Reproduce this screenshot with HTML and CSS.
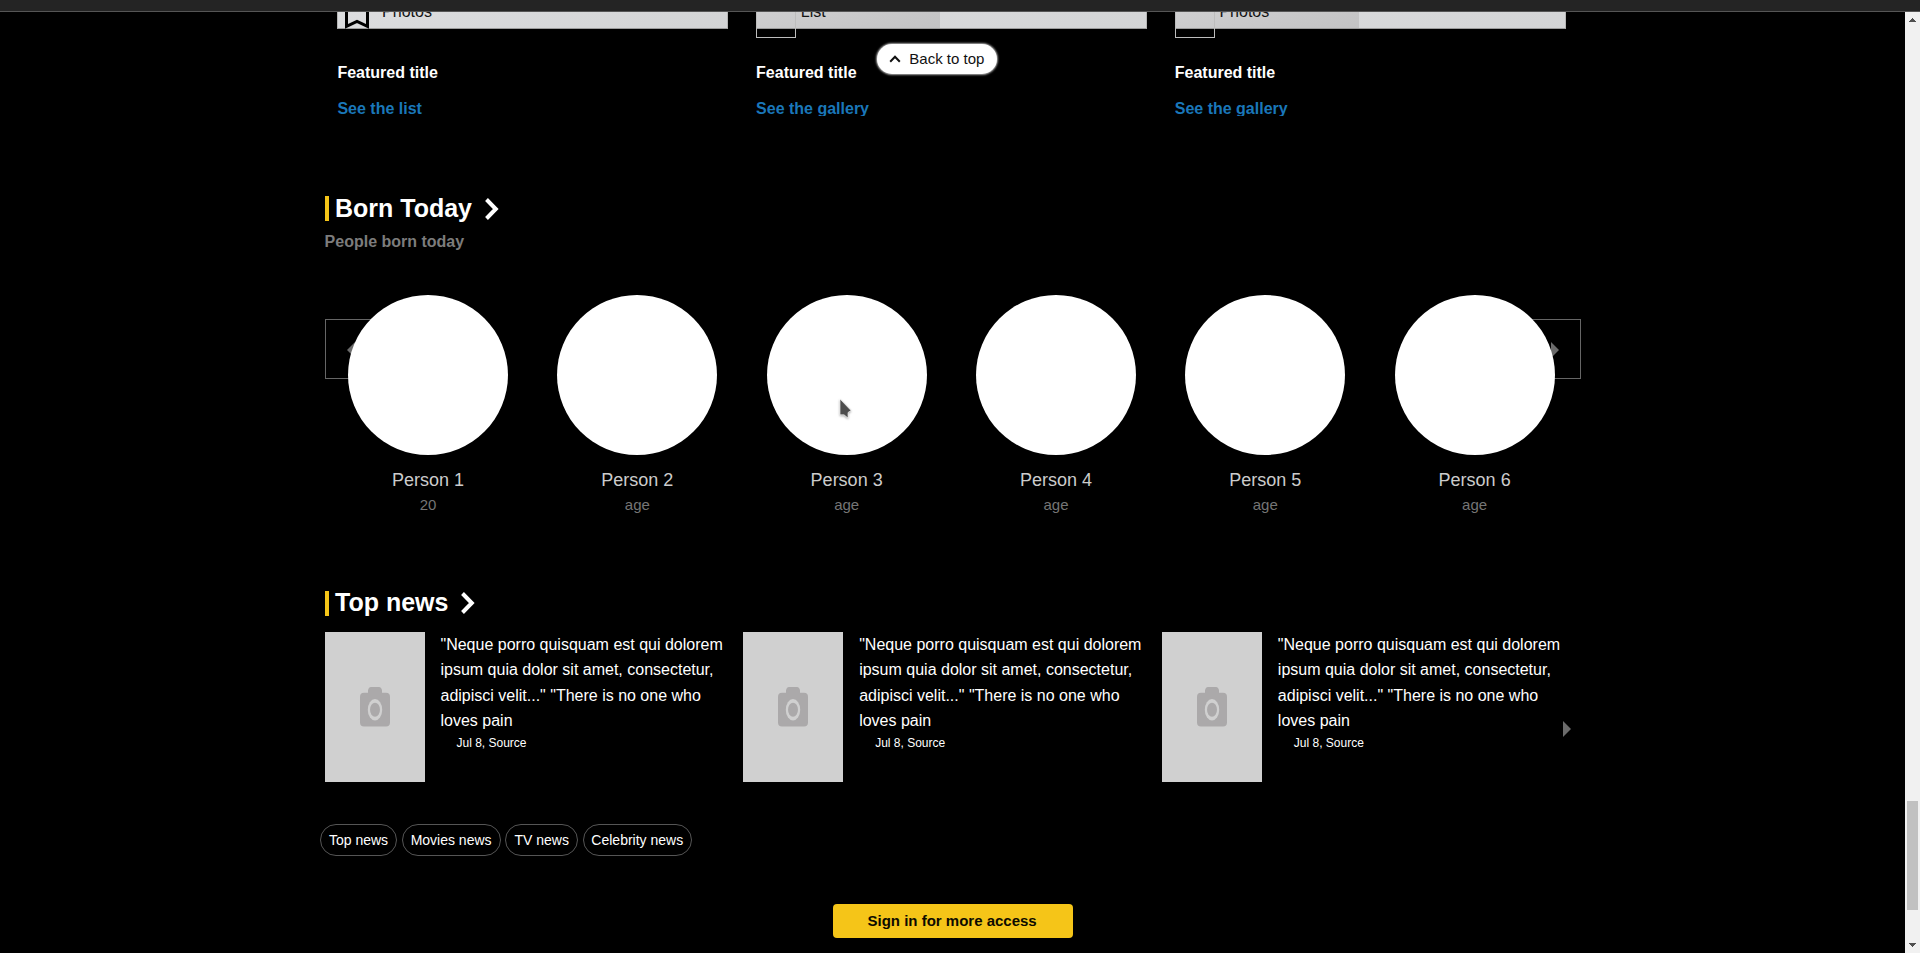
FILE: index.html
```html
<!DOCTYPE html>
<html lang="en">
<head>
<meta charset="utf-8">
<title>Home</title>
<link rel="stylesheet" href="styles.css">
</head>
<body>
<header class="topbar"></header>
<div class="viewport">
  <main class="page">
    <section class="featured">
      <article class="feature">
        <div class="poster">
          <svg class="bookmark" width="24" height="30" viewBox="0 0 24 30"><path d="M1.5 0V27.3L12 22.5L22.5 27.3V0" fill="none" stroke="#000" stroke-width="3"/></svg>
          <span class="poster-label">Photos</span>
        </div>
        <h3 class="feature-title">Featured title</h3>
        <a class="feature-link">See the list</a>
      </article>
      <article class="feature">
        <div class="poster"><div class="shade"></div><div class="ribbon"></div><span class="poster-label">List</span></div>
        <h3 class="feature-title">Featured title</h3>
        <a class="feature-link">See the gallery</a>
      </article>
      <article class="feature">
        <div class="poster"><div class="shade"></div><div class="ribbon"></div><span class="poster-label">Photos</span></div>
        <h3 class="feature-title">Featured title</h3>
        <a class="feature-link">See the gallery</a>
      </article>
    </section>

    <section class="born">
      <h2 class="heading"><span class="bar"></span>Born Today
        <svg class="chevron" width="14" height="22" viewBox="0 0 14 22"><path d="M1.5 1.5L10.800 11L1.5 20.5" fill="none" stroke="#fff" stroke-width="4"/></svg>
      </h2>
      <p class="subheading">People born today</p>
      <div class="people-wrap">
        <button class="nav nav-prev"><svg width="8" height="16" viewBox="0 0 8 16"><path d="M8 0V16L0 8Z" fill="#6b6b6b"/></svg></button>
        <button class="nav nav-next"><svg width="8" height="16" viewBox="0 0 8 16"><path d="M0 0V16L8 8Z" fill="#6b6b6b"/></svg></button>
        <div class="people">
          <div class="person"><div class="avatar"></div><div class="name">Person 1</div><div class="age">20</div></div>
          <div class="person"><div class="avatar"></div><div class="name">Person 2</div><div class="age">age</div></div>
          <div class="person"><div class="avatar"></div><div class="name">Person 3</div><div class="age">age</div></div>
          <div class="person"><div class="avatar"></div><div class="name">Person 4</div><div class="age">age</div></div>
          <div class="person"><div class="avatar"></div><div class="name">Person 5</div><div class="age">age</div></div>
          <div class="person"><div class="avatar"></div><div class="name">Person 6</div><div class="age">age</div></div>
        </div>
      </div>
    </section>

    <section class="news">
      <h2 class="heading"><span class="bar"></span>Top news
        <svg class="chevron" width="14" height="22" viewBox="0 0 14 22"><path d="M1.5 1.5L10.800 11L1.5 20.5" fill="none" stroke="#fff" stroke-width="4"/></svg>
      </h2>
      <svg width="0" height="0" class="defs">
        <symbol id="camera" viewBox="0 0 30 40">
          <path d="M8 5.800V3.500Q8.500 0 11 0H19Q21.500 0 22 3.500V5.800H26Q30 5.800 30 10V35.500Q30 39.500 26 39.500H4Q0 39.500 0 35.500V10Q0 5.800 4 5.800Z" fill="#aba9aa"/>
          <ellipse cx="15" cy="22.800" rx="7.200" ry="10.700" fill="#d0d0d0"/>
          <ellipse cx="15" cy="22.800" rx="5" ry="7" fill="#aba9aa"/>
        </symbol>
      </svg>
      <div class="stories">
        <article class="story">
          <div class="thumb"><svg width="30" height="40"><use href="#camera"/></svg></div>
          <div class="story-body"><p class="story-text">"Neque porro quisquam est qui dolorem ipsum quia dolor sit amet, consectetur, adipisci velit..." "There is no one who loves pain</p><p class="source">Jul 8, Source</p></div>
        </article>
        <article class="story">
          <div class="thumb"><svg width="30" height="40"><use href="#camera"/></svg></div>
          <div class="story-body"><p class="story-text">"Neque porro quisquam est qui dolorem ipsum quia dolor sit amet, consectetur, adipisci velit..." "There is no one who loves pain</p><p class="source">Jul 8, Source</p></div>
        </article>
        <article class="story">
          <div class="thumb"><svg width="30" height="40"><use href="#camera"/></svg></div>
          <div class="story-body"><p class="story-text">"Neque porro quisquam est qui dolorem ipsum quia dolor sit amet, consectetur, adipisci velit..." "There is no one who loves pain</p><p class="source">Jul 8, Source</p></div>
        </article>
        <svg class="stories-next" width="8" height="16" viewBox="0 0 8 16"><path d="M0 0V16L8 8Z" fill="#6b6b6b"/></svg>
      </div>
      <nav class="pills">
        <a class="pill pill-top">Top news</a><a class="pill pill-movies">Movies news</a><a class="pill pill-tv">TV news</a><a class="pill pill-celebrity">Celebrity news</a>
      </nav>
    </section>
    <button class="signin">Sign in for more access</button>
  </main>
  <aside class="scrollbar">
    <svg width="7" height="4" viewBox="0 0 7 4"><path d="M3 0h1v1h1v1h1v1h1v1H0V3h1V2h1V1h1z" fill="#505050"/></svg>
    <div class="track"><div class="scroll-thumb"></div></div>
    <svg width="7" height="4" viewBox="0 0 7 4"><path d="M0 0h7v1H6v1H5v1H4v1H3V3H2V2H1V1H0z" fill="#505050"/></svg>
  </aside>
</div>
<button class="back-to-top"><svg width="12" height="8" viewBox="0 0 12 8"><path d="M1.200 6.800L6 1.800L10.800 6.800" fill="none" stroke="#111" stroke-width="2"/></svg><span class="back-label">Back to top</span></button>
<svg class="cursor" width="16" height="24" viewBox="0 0 16 24"><path d="M2 2V17.800H6L10 21V15.500L13 13.500Z" fill="#4d4d4d" stroke="#fff" stroke-width=".6"/></svg>
</body>
</html>
```

FILE: styles.css
```css
* { box-sizing: border-box; margin: 0; padding: 0; }
body {
  width: 1920px;
  height: 953px;
  overflow: hidden;
  display: flex;
  flex-direction: column;
  background: #000;
  color: #fff;
  font: 16px/20px "Liberation Sans", Arial, sans-serif;
}
button { font-family: inherit; border: 0; }

.topbar { position: relative; z-index: 1; height: 12px; flex: none; background: #242424; border-bottom: 1px solid #555; }
.viewport { display: flex; height: 941px; overflow: hidden; }
.page { flex: 1; padding: 0 324.400px 0 324.600px; display: flex; flex-direction: column; }

.featured { display: grid; grid-template-columns: repeat(3, 1fr); height: 183px; }
.feature { padding: 0 15px 0 12.800px; }
.poster {
  position: relative;
  height: 17px;
  background: linear-gradient(165deg, #dcdddf, #d3d4d5);
  border: 1px solid;
  border-top: 0;
  border-color: #b5b5b5 #b5b5b5 #9b9b9b;
}
.shade { width: 183px; height: 16px; background: linear-gradient(165deg, #cfcfd0, #c3c3c4); }
.ribbon { position: absolute; left: -1px; top: -4px; width: 40px; height: 30px; border: 1px solid #bdbdbd; }
.bookmark { position: absolute; left: 7px; top: -13px; }
.poster-label { position: absolute; left: 43.700px; top: -10px; line-height: 20px; color: #141414; }
.feature-title { margin-top: 34px; font-size: 16px; line-height: 20px; }
.feature-link { display: block; margin-top: 16px; height: 17px; overflow: hidden; font-weight: bold; color: #1a77b9; }

.heading { display: flex; align-items: center; height: 27px; font-size: 25px; line-height: 27px; }
.bar { width: 4px; height: 25px; margin-right: 6.400px; background: #f5c518; }
.news .bar { margin-top: 2px; }
.chevron { margin-left: 12.700px; }
.subheading { margin-top: 10px; line-height: 20px; font-weight: bold; color: #7c7c7c; }

.born { height: 394px; }
.people-wrap { position: relative; margin-top: 43px; }
.people { position: relative; display: flex; gap: 49.330px; padding-left: 23.400px; }
.person { width: 160px; flex: none; text-align: center; }
.avatar { height: 160px; border-radius: 50%; background: #fff; }
.name { margin-top: 14px; font-size: 18px; line-height: 22px; color: #ccc; }
.age { margin-top: 4px; font-size: 15px; line-height: 20px; color: #757575; }
.nav { position: absolute; top: 24px; width: 60px; height: 60px; display: flex; align-items: center; padding-top: 2px; background: transparent; border: 1px solid #666; }
.nav-prev { left: 0; padding-left: 21.400px; }
.nav-next { right: 0; justify-content: flex-end; padding-right: 21px; }

.news { height: 303px; }
.defs { display: block; }
.stories { position: relative; display: grid; grid-template-columns: repeat(3, 1fr); margin-top: 16px; }
.story { display: flex; gap: 15.900px; }
.thumb { width: 100px; height: 150px; flex: none; display: flex; align-items: center; justify-content: center; background: #d0d0d0; }
.story-body { width: 290px; }
.story-text { line-height: 25.300px; }
.source { margin-top: .8px; padding-left: 16px; font-size: 12px; line-height: 18px; }
.stories-next { position: absolute; right: 10px; top: 89px; }

.pills { display: flex; margin: 42px 0 0 -4.600px; gap: 4.600px; }
.pill { height: 32px; display: flex; align-items: center; justify-content: center; border: 1px solid #555; border-radius: 16px; font-size: 14px; }
.pill-top { width: 77px; }
.pill-movies { width: 99px; }
.pill-tv { width: 73px; }
.pill-celebrity { width: 109px; }

.signin { align-self: center; width: 240px; height: 34px; margin-top: 12px; padding: 0 1px 2px 0; border-radius: 4px; background: #f5c518; color: #0d0b00; font-size: 15px; font-weight: bold; }

.scrollbar { width: 15px; flex: none; display: flex; flex-direction: column; align-items: center; padding: 6px 0; background: #f1f1f1; }
.track { flex: 1; padding-top: 779px; }
.scroll-thumb { width: 11px; height: 109px; background: #c1c1c1; }

.back-to-top {
  position: absolute; left: 877px; top: 44px; width: 120px; height: 30px;
  display: flex; align-items: center; gap: 8.300px; padding-left: 12px;
  border-radius: 15px; background: #fff; color: #111; font-size: 15px;
  box-shadow: 0 0 2px 1px #aaa;
}
.back-label { padding-bottom: 2px; }
.cursor { position: absolute; left: 838px; top: 396.500px; filter: drop-shadow(0 1px 1px rgba(0, 0, 0, .35)); }
```
